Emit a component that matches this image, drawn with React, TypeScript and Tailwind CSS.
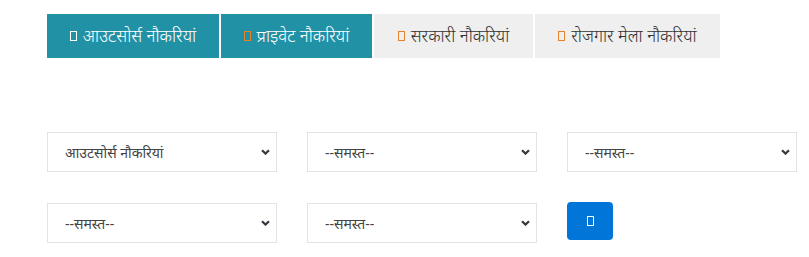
import React from 'react'

const tabs = [
  { label: 'आउटसोर्स नौकरियां', active: true, icon: 'border-white', w: 'w-[172px]' },
  { label: 'प्राइवेट नौकरियां', active: true, icon: 'border-[#e8822a]', w: 'w-[151px]' },
  { label: 'सरकारी नौकरियां', active: false, icon: 'border-[#e8822a]', w: 'w-[159px]' },
  { label: 'रोजगार मेला नौकरियां', active: false, icon: 'border-[#e8822a]', w: 'w-[185px]' },
]

function Chevron() {
  return (
    <svg width="9" height="6" viewBox="0 0 9 6" className="pointer-events-none absolute right-[7px] top-1/2 -translate-y-1/2">
      <path d="M1 1.2 L4.5 4.6 L8 1.2" fill="none" stroke="#343a40" strokeWidth="2.2" />
    </svg>
  )
}

function Select({ value }: { value: string }) {
  return (
    <div className="relative w-[230px] h-[40px]">
      <select
        defaultValue={value}
        className="appearance-none w-full h-full bg-white border border-[#e3e3e3] pl-[17px] pr-8 text-[14px] text-[#444] outline-none"
      >
        <option>{value}</option>
      </select>
      <Chevron />
    </div>
  )
}

export default function App() {
  return (
    <div className="w-[809px] h-[257px] bg-white pt-[14px] pl-[47px] font-['Noto_Sans','Liberation_Sans',sans-serif] overflow-hidden">
      {/* job type tabs */}
      <div className="flex gap-[2px]">
        {tabs.map((t) => (
          <div
            key={t.label}
            className={`${t.w} h-[44px] flex items-center justify-center gap-[6px] text-[17px] font-light ${
              t.active ? 'bg-[#2191a6] text-white' : 'bg-[#efefef] text-[#333]'
            }`}
          >
            <span className={`inline-block w-[7px] h-[10px] border ${t.icon}`} />
            <span>{t.label}</span>
          </div>
        ))}
      </div>

      {/* filters */}
      <div className="mt-[74px] grid grid-cols-[230px_230px_230px] gap-x-[30px] gap-y-[31px]">
        <Select value="आउटसोर्स नौकरियां" />
        <Select value="--समस्त--" />
        <Select value="--समस्त--" />
        <Select value="--समस्त--" />
        <Select value="--समस्त--" />
        <div className="-mt-[1px]">
          <button className="w-[46px] h-[38px] rounded-[4px] bg-[#0275d8] flex items-center justify-center">
            <span className="inline-block w-[7px] h-[10px] border border-white" />
          </button>
        </div>
      </div>
    </div>
  )
}
